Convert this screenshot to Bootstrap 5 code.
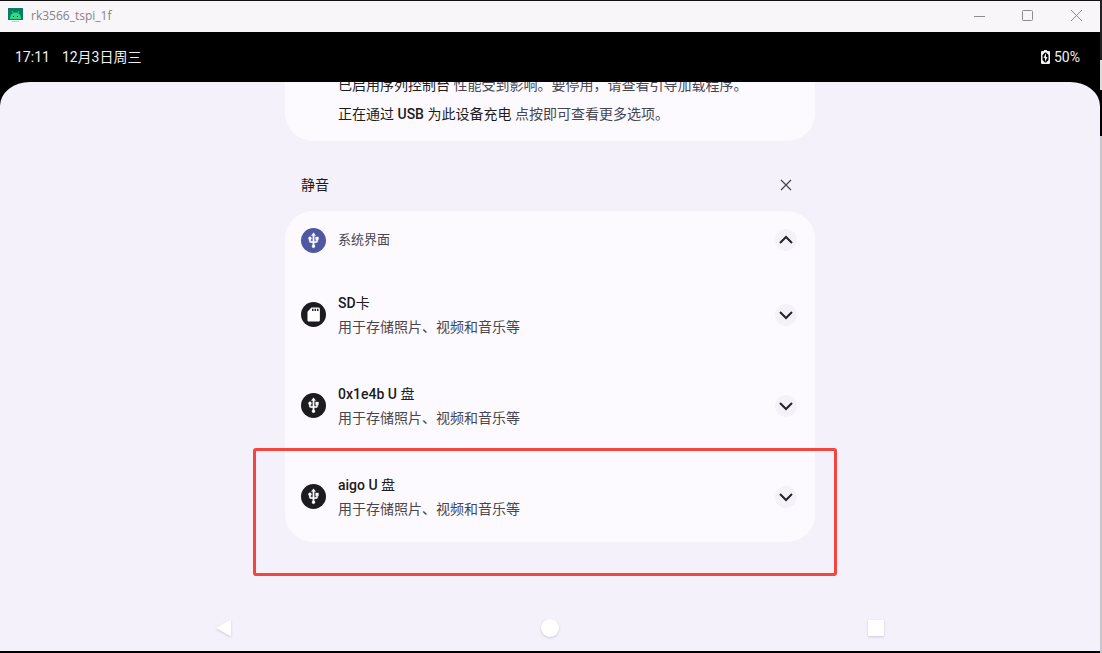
<!DOCTYPE html>
<html lang="zh-CN">
<head>
<meta charset="utf-8">
<meta name="viewport" content="width=device-width, initial-scale=1">
<title>rk3566_tspi_1f</title>
<link href="https://cdn.jsdelivr.net/npm/bootstrap@5.3.0/dist/css/bootstrap.min.css" rel="stylesheet">
<style>
  body { font-family: Roboto, "Noto Sans CJK SC", sans-serif; font-size: 14px; line-height: 24px; color: #1c1b20; background: #000; }
  button { color: inherit; }
  .desktop-edge { width: 2px; background: linear-gradient(#222 60px, #ddd 60px 90px, #000 90px 136px, #c9c7cc 136px); }
  .emulator { border-top: 1px solid #111; border-bottom: 2px solid #000; }
  .title-bar { height: 31px; background: #f9f6fa; color: #85838a; font-family: "Open Sans", "Noto Sans", sans-serif; font-size: 12px; padding: 0 16px 2px 8px; }
  .window-btn { width: 16px; height: 16px; color: #8d8b90; }
  .status-bar { height: 50px; background: #000; color: #f1f1f1; padding: 0 20px 0 15px; }
  .status-date { margin-left: 12px; }
  .shade { background: #f4f1fa; border-radius: 30px 30px 0 0 / 24px 24px 0 0; }
  .notice-column { width: 100%; max-width: 530px; }
  .notice-group { background: #fdfaff; border-radius: 28px; }
  .ongoing { margin-top: -11px; padding: 0 16px 12px 53px; line-height: 29px; border-radius: 0 0 28px 28px; }
  .section-head { padding: 24px 18px 6px 16px; line-height: 40px; }
  .group-head { height: 58px; }
  .notice { height: 91px; }
  .group-head, .notice { padding: 0 18px 0 16px; gap: 12px; }
  .app-icon { width: 25px; height: 25px; flex: none; border-radius: 50%; background: #1c1b20; color: #fff; }
  .app-icon.system { background: #4f58a0; }
  .round-btn { width: 22px; height: 22px; border-radius: 50%; background: #f4f1f8; }
  .muted { color: #47464f; }
  .strong-text { color: #1c1b20; }
  .app-name { font-size: 13px; }
  .highlight { position: absolute; inset: -3px -22px -34px -32px; border: 3px solid #f4463f; border-radius: 3px; pointer-events: none; }
  .nav-keys { height: 46px; padding: 0 61px; }
  .nav-keys svg { filter: drop-shadow(0 1px 1px #cbc8d6); }
</style>
</head>
<body>
<svg class="d-none" aria-hidden="true">
  <symbol id="usb" viewBox="0 0 24 24"><path fill="currentColor" stroke="currentColor" stroke-width=".5" d="M15 7v4h1v2h-3V5h2l-3-4-3 4h2v8H8v-2.070c.7-.37 1.200-1.080 1.200-1.930 0-1.210-.99-2.200-2.200-2.200S4.800 7.790 4.800 9c0 .85.500 1.560 1.200 1.930V13c0 1.110.89 2 2 2h3v3.050c-.71.370-1.200 1.100-1.200 1.950 0 1.220.99 2.200 2.200 2.200s2.200-.98 2.200-2.200c0-.85-.49-1.580-1.200-1.950V15h3c1.110 0 2-.89 2-2v-2h1V7z"/></symbol>
  <symbol id="down" viewBox="0 0 16 16"><path d="M2 5l6 6 6-6" fill="none" stroke="currentColor" stroke-width="2"/></symbol>
</svg>
<div class="d-flex min-vh-100">
  <div class="emulator d-flex flex-column flex-grow-1">
    <header class="title-bar d-flex align-items-center">
      <svg class="me-2" width="15" height="16" viewBox="0 0 15 16" aria-hidden="true"><path fill="#087d62" d="M0 0h15v12H0z"/><path fill="#30d889" d="M2 10a5.500 5.500 0 0 1 11 0v1H2z"/><path d="M4 3l2 3m5-3L9 6" stroke="#30d889"/><path fill="#073042" d="M5 8h1v1H5zm4 0h1v1H9z"/><path fill="#c9c7cc" d="M4 13h7v1H4z"/></svg>
      <span>rk3566_tspi_1f</span>
      <div class="d-flex ms-auto gap-4">
        <button class="btn border-0 p-0 d-flex window-btn me-2" aria-label="最小化"><svg width="16" height="16"><path d="M2 8.500h11" stroke="currentColor"/></svg></button>
        <button class="btn border-0 p-0 d-flex window-btn me-2" aria-label="最大化"><svg width="16" height="16"><rect x="2.500" y="2.500" width="10" height="10" rx="1" fill="none" stroke="currentColor"/></svg></button>
        <button class="btn border-0 p-0 d-flex window-btn" aria-label="关闭"><svg width="16" height="16"><path d="M3 2l11 11M14 2L3 13" stroke="currentColor"/></svg></button>
      </div>
    </header>
    <div class="bg-black d-flex flex-column flex-grow-1">
      <div class="status-bar d-flex align-items-center">
        <span>17:11</span><span class="status-date">12月3日周三</span>
        <span class="ms-auto d-flex align-items-center gap-1"><svg width="9" height="14" viewBox="0 0 9 14" aria-hidden="true"><path fill="#f1f1f1" fill-rule="evenodd" d="M3 0h3v1h2q1 0 1 1v11q0 1-1 1H1q-1 0-1-1V2q0-1 1-1h2zM4 2.500L1.500 5v5L4 12.500h1L7.500 10V5L5 2.500z"/><path fill="#f1f1f1" d="M5 3L2.500 8H4v4l2.500-5H5z"/></svg>50%</span>
      </div>
      <main class="shade d-flex flex-column flex-grow-1 overflow-hidden">
        <div class="notice-column mx-auto flex-grow-1">
          <section class="notice-group ongoing muted">
            <div><span class="strong-text">已启用序列控制台</span> 性能受到影响。要停用，请查看引导加载程序。</div>
            <div><span class="strong-text">正在通过 <span class="fw-medium">USB</span> 为此设备充电</span> 点按即可查看更多选项。</div>
          </section>
          <div class="section-head d-flex align-items-center justify-content-between">
            <span>静音</span>
            <button class="btn border-0 p-0 d-flex align-items-center justify-content-center round-btn bg-transparent muted" aria-label="清除"><svg width="12" height="12"><path d="M1 1l10 10M11 1L1 11" stroke="currentColor" stroke-width="1.300"/></svg></button>
          </div>
          <section class="notice-group">
            <div class="group-head d-flex align-items-center">
              <span class="app-icon system d-flex align-items-center justify-content-center"><svg width="17" height="17"><use href="#usb"/></svg></span>
              <span class="app-name muted">系统界面</span>
              <button class="btn border-0 p-0 ms-auto d-flex align-items-center justify-content-center round-btn" aria-label="收起"><svg width="16" height="16" viewBox="0 0 16 16"><path d="M2 11l6-6 6 6" fill="none" stroke="currentColor" stroke-width="2"/></svg></button>
            </div>
            <ul class="list-unstyled mb-0">
              <li class="notice d-flex align-items-center">
                <span class="app-icon d-flex align-items-center justify-content-center"><svg width="17" height="17" viewBox="0 0 24 24"><path fill="currentColor" fill-rule="evenodd" d="M19 2H9L3.500 8v12c0 1.100.9 2 2 2H19c1.100 0 2-.9 2-2V4c0-1.100-.9-2-2-2zm-7 5h-2V4h2v3zm3.500 0h-2V4h2v3zm3.500 0h-2V4h2v3z"/></svg></span>
                <div><div><span class="fw-medium">SD</span>卡</div><div class="muted">用于存储照片、视频和音乐等</div></div>
                <button class="btn border-0 p-0 ms-auto d-flex align-items-center justify-content-center round-btn" aria-label="展开"><svg width="16" height="16"><use href="#down"/></svg></button>
              </li>
              <li class="notice d-flex align-items-center">
                <span class="app-icon d-flex align-items-center justify-content-center"><svg width="17" height="17"><use href="#usb"/></svg></span>
                <div><div><span class="fw-medium">0x1e4b U</span> 盘</div><div class="muted">用于存储照片、视频和音乐等</div></div>
                <button class="btn border-0 p-0 ms-auto d-flex align-items-center justify-content-center round-btn" aria-label="展开"><svg width="16" height="16"><use href="#down"/></svg></button>
              </li>
              <li class="notice d-flex align-items-center position-relative">
                <span class="app-icon d-flex align-items-center justify-content-center"><svg width="17" height="17"><use href="#usb"/></svg></span>
                <div><div><span class="fw-medium">aigo U</span> 盘</div><div class="muted">用于存储照片、视频和音乐等</div></div>
                <button class="btn border-0 p-0 ms-auto d-flex align-items-center justify-content-center round-btn" aria-label="展开"><svg width="16" height="16"><use href="#down"/></svg></button>
                <span class="highlight"></span>
              </li>
            </ul>
          </section>
        </div>
        <nav class="nav-keys d-flex align-items-center" aria-label="导航">
          <button class="btn border-0 p-0 flex-fill d-flex justify-content-center" aria-label="返回"><svg width="20" height="20"><path fill="#fff" d="M2 10L16 2q1 0 1 1v14q0 1-1 1z"/></svg></button>
          <button class="btn border-0 p-0 flex-fill d-flex justify-content-center" aria-label="主屏幕"><svg width="20" height="20"><circle cx="10" cy="10" r="9" fill="#fff"/></svg></button>
          <button class="btn border-0 p-0 flex-fill d-flex justify-content-center" aria-label="最近任务"><svg width="20" height="20"><rect x="2" y="2" width="16" height="16" rx="1" fill="#fff"/></svg></button>
        </nav>
      </main>
    </div>
  </div>
  <div class="desktop-edge"></div>
</div>
<script src="https://cdn.jsdelivr.net/npm/bootstrap@5.3.0/dist/js/bootstrap.bundle.min.js"></script>
</body>
</html>
